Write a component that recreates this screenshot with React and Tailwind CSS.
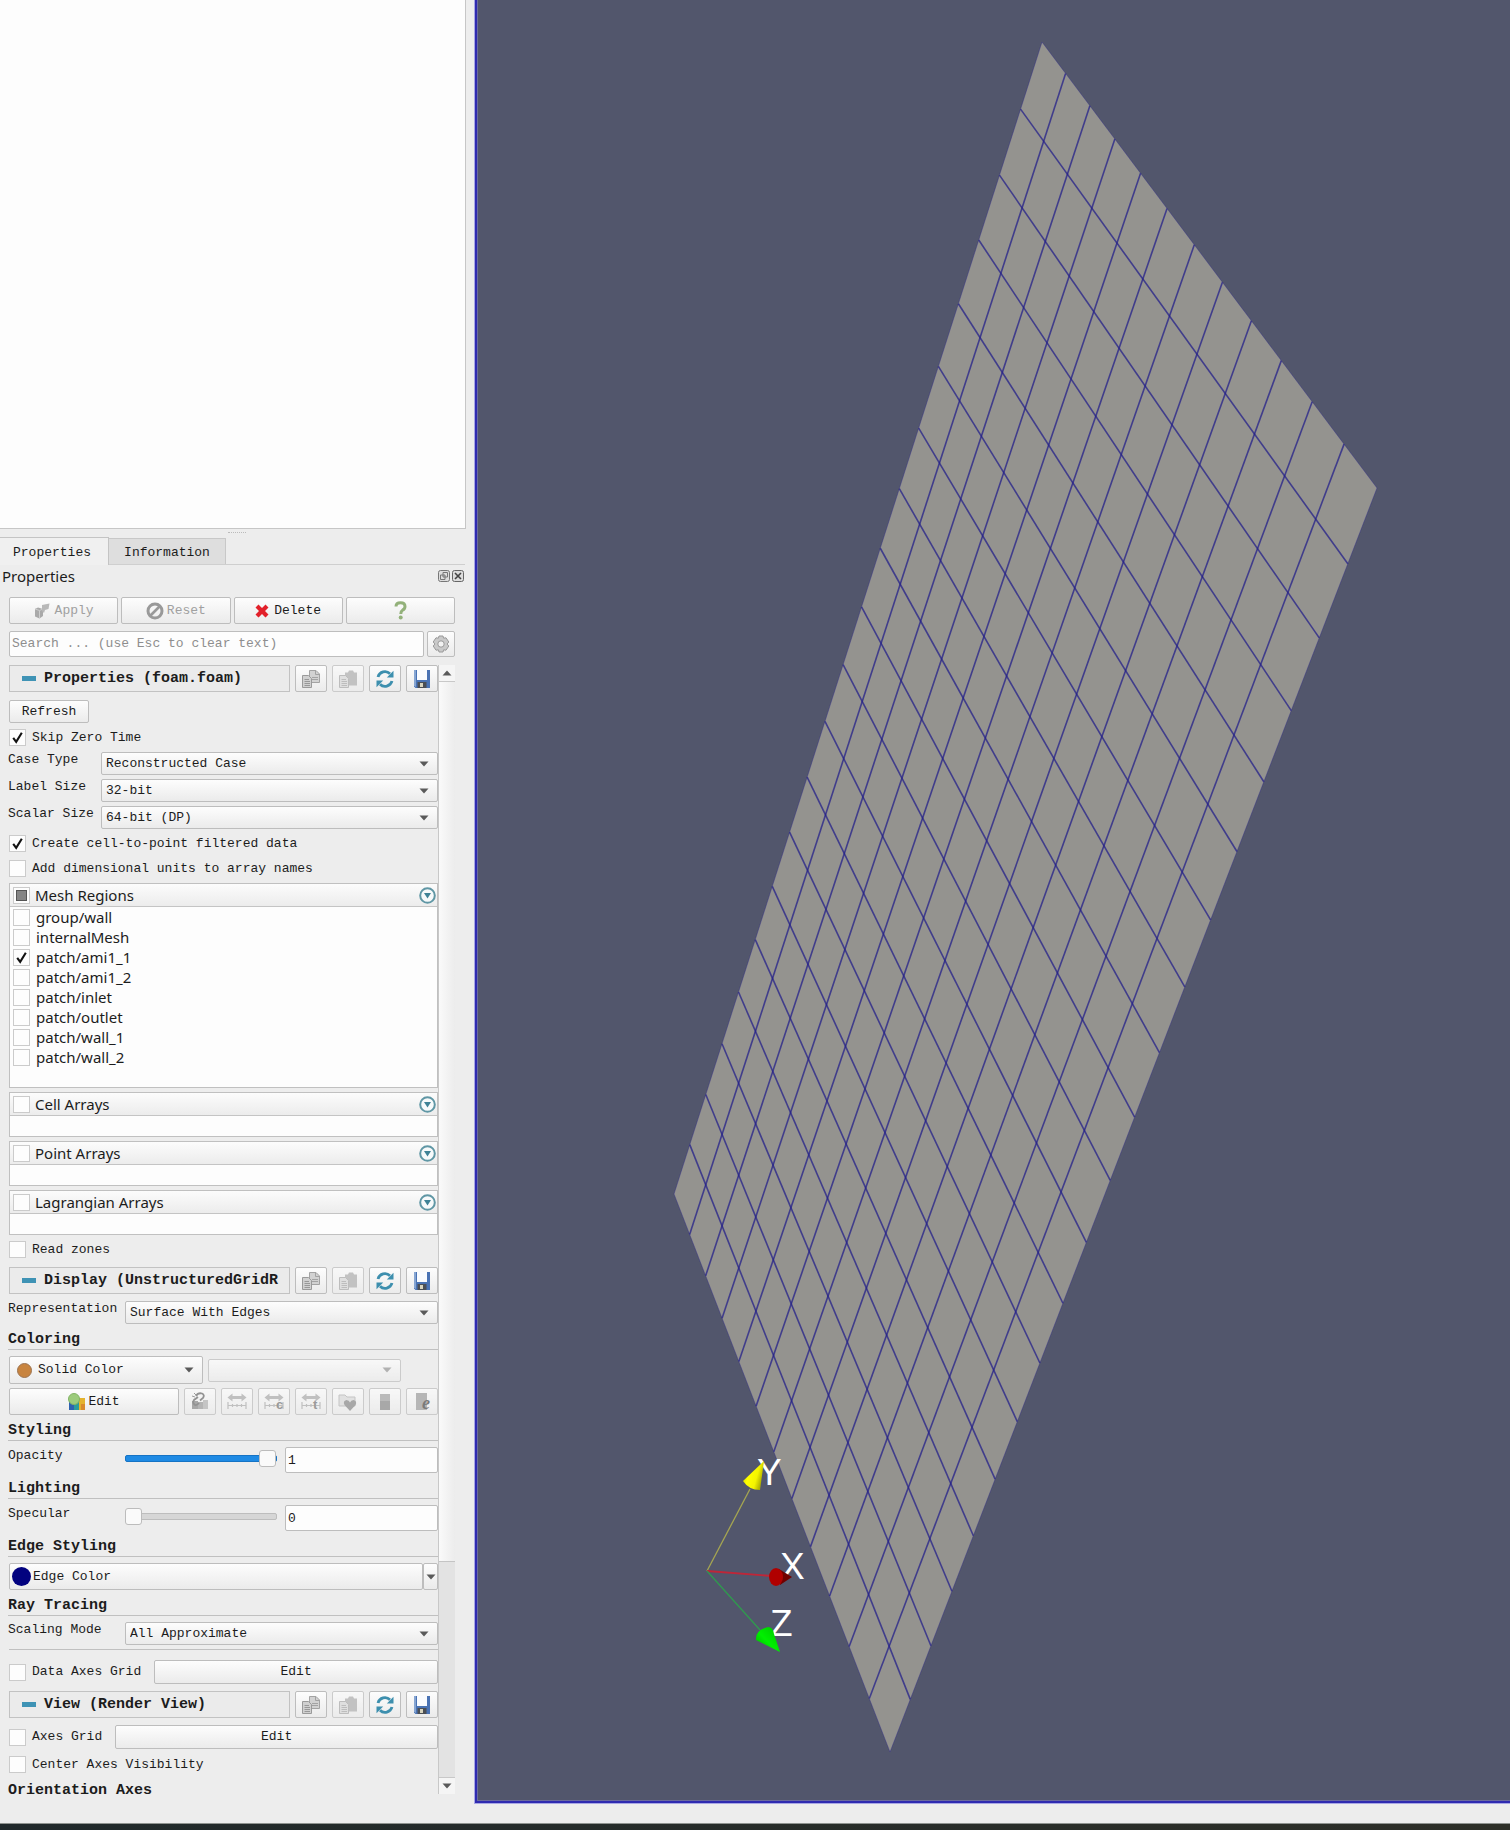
import React, { useEffect, useId, useRef } from "react";

const CORNERS = { top: [1042, 42], right: [1377, 488], bottom: [890, 1752], left: [674, 1194] };

// Projective map of the unit square: u runs top -> right, v runs top -> left.
function makeProjection({ top, right, bottom, left }) {
  const dx1 = right[0] - bottom[0], dx2 = left[0] - bottom[0];
  const dy1 = right[1] - bottom[1], dy2 = left[1] - bottom[1];
  const sx = top[0] - right[0] + bottom[0] - left[0];
  const sy = top[1] - right[1] + bottom[1] - left[1];
  const det = dx1 * dy2 - dx2 * dy1;
  const g = (sx * dy2 - dx2 * sy) / det;
  const h = (dx1 * sy - sx * dy1) / det;
  const a = right[0] - top[0] + g * right[0], b = left[0] - top[0] + h * left[0];
  const d = right[1] - top[1] + g * right[1], e = left[1] - top[1] + h * left[1];
  return (u, v) => {
    const w = g * u + h * v + 1;
    return [(a * u + b * v + top[0]) / w, (d * u + e * v + top[1]) / w];
  };
}

const project = makeProjection(CORNERS);
const COLUMNS = 12;
const ROWS = 20;

function meshLines() {
  const lines = [];
  for (let i = 0; i <= COLUMNS; i++) lines.push([project(i / COLUMNS, 0), project(i / COLUMNS, 1)]);
  for (let j = 0; j <= ROWS; j++) lines.push([project(0, j / ROWS), project(1, j / ROWS)]);
  return lines;
}

function RenderView() {
  return (
    <svg className="block h-full w-full" viewBox="478 0 1032 1800" preserveAspectRatio="xMidYMid slice" role="img" aria-label="Render view">
      <defs>
        <linearGradient id="coneY" x1="0" y1="0" x2="1" y2="0.4">
          <stop offset="0" stopColor="#b5b500" /><stop offset="0.4" stopColor="#ffff00" /><stop offset="0.75" stopColor="#f4f400" /><stop offset="1" stopColor="#b0b000" />
        </linearGradient>
        <linearGradient id="coneZ" x1="0" y1="1" x2="1" y2="0">
          <stop offset="0" stopColor="#00a800" /><stop offset="0.45" stopColor="#00f000" /><stop offset="1" stopColor="#00c400" />
        </linearGradient>
      </defs>
      <polygon points={Object.values(CORNERS).map((p) => p.join(",")).join(" ")} fill="#94938f" />
      <g stroke="#24208a">
        {meshLines().map(([p, q], i) => {
          const edge = i === 0 || i === COLUMNS || i === COLUMNS + 1 || i === COLUMNS + ROWS + 1;
          return <line key={i} x1={p[0]} y1={p[1]} x2={q[0]} y2={q[1]} strokeOpacity={edge ? 0.35 : 0.75} strokeWidth={edge ? 1 : 1.6} />;
        })}
      </g>
      <g strokeWidth="1.3">
        <line x1="707" y1="1571" x2="750" y2="1489" stroke="#a5a551" />
        <line x1="707" y1="1571" x2="772" y2="1576" stroke="#bf2638" strokeWidth="1.8" />
        <line x1="707" y1="1571" x2="760" y2="1630" stroke="#2f9a4e" />
      </g>
      <g fill="#fff" fontFamily="'Liberation Sans', sans-serif" fontSize="37">
        <text x="757" y="1485">Y</text>
        <text x="780" y="1579">X</text>
        <text x="770" y="1636">Z</text>
      </g>
      <path d="M764 1461 L743 1481 Q749 1490 760 1490 Z" fill="url(#coneY)" />
      <path d="M779 1569 L792 1577 L780 1585 Z" fill="#700000" />
      <ellipse cx="776" cy="1577" rx="7" ry="9" fill="#b00000" />
      <path d="M780 1652 L756 1640 Q755 1630 768 1627 Q773 1627 774 1634 Z" fill="url(#coneZ)" />
    </svg>
  );
}

function Caret({ className = "" }) {
  return (
    <svg className={"h-[6px] w-[10px] " + className} viewBox="0 0 10 6" aria-hidden="true">
      <path d="M0.5 0.5 H9.5 L5 5.5 Z" fill="currentColor" />
    </svg>
  );
}

function CheckBox({ state = false, id, label }) {
  const ref = useRef(null);
  useEffect(() => { ref.current.indeterminate = state === "mixed"; }, [state]);
  return (
    <span className="grid h-[17px] w-[17px] shrink-0 place-items-center">
      <input ref={ref} id={id} aria-label={label} type="checkbox" defaultChecked={state === true} className="peer col-start-1 row-start-1 m-0 h-[17px] w-[17px] appearance-none border border-[#cbcbcb] bg-[#fdfdfd]" />
      <svg className="pointer-events-none col-start-1 row-start-1 hidden h-[13px] w-[13px] peer-checked:block" viewBox="0 0 13 13" aria-hidden="true">
        <path d="M2.2 6.8 L5.2 10.8 L10.8 1.8" fill="none" stroke="#111" strokeWidth="2.1" />
      </svg>
      <span className="pointer-events-none col-start-1 row-start-1 hidden h-[11px] w-[11px] border border-[#555] bg-[#858585] peer-indeterminate:block" />
    </span>
  );
}

function CheckRow({ label, checked, className = "" }) {
  const id = useId();
  return (
    <div className={"flex h-[17px] items-center gap-[6px] " + className}>
      <CheckBox state={checked} id={id} />
      <label htmlFor={id} className="whitespace-pre">{label}</label>
    </div>
  );
}

const FACE = "rounded-[2px] border border-[#bdbdbd] bg-linear-to-b from-[#fdfdfd] to-[#ebebeb]";

function Select({ id, value, className = "", label }) {
  return (
    <div className={"grid items-center " + className}>
      <select id={id} aria-label={label} className={"col-start-1 row-start-1 h-full w-full appearance-none pl-[4px] " + FACE}>
        <option>{value}</option>
      </select>
      <Caret className="pointer-events-none col-start-1 row-start-1 mr-[9px] justify-self-end text-[#5a5a5a]" />
    </div>
  );
}

function SelectRow({ label, value, wide, className = "" }) {
  const id = useId();
  return (
    <div className={"flex h-[23px] " + className}>
      <label htmlFor={id} className={"-ml-px shrink-0 leading-[16px] " + (wide ? "w-[117px]" : "w-[93px]")}>{label}</label>
      <Select id={id} value={value} className="min-w-0 flex-1" />
    </div>
  );
}

function ToolButton({ label, children, disabled }) {
  return (
    <button type="button" aria-label={label} disabled={disabled} className={"flex h-[27px] w-[32px] shrink-0 items-center justify-center " + FACE + (disabled ? " opacity-70" : "")}>
      {children}
    </button>
  );
}

function CopyIcon() {
  return (
    <svg className="h-5 w-5" viewBox="0 0 20 20" aria-hidden="true">
      <path d="M8.5 1.5 H15 L18.5 5 V13.5 H8.5 Z" fill="#d2d2d2" stroke="#a3a3a3" />
      <path d="M14.5 1.5 V5.5 H18.5 M11 8.5 H17 M11 10.5 H17" fill="none" stroke="#a3a3a3" />
      <path d="M1.5 6.5 H7.5 L10.5 9.5 V18.5 H1.5 Z" fill="#d0d0d0" stroke="#9a9a9a" />
      <path d="M3.5 10.5 H8 M3.5 12.5 H9 M3.5 14.5 H9 M3.5 16.5 H9" stroke="#989898" />
    </svg>
  );
}

function PasteIcon() {
  return (
    <svg className="h-5 w-5" viewBox="0 0 20 20" aria-hidden="true">
      <path d="M7 3.5 L10 3.5 L11 1.5 H15 L16 3.5 H19 V16.5 H7 Z" fill="#b0b0b0" />
      <path d="M1.5 6.5 H7.5 L10.5 9.5 V18.5 H1.5 Z" fill="#dadada" stroke="#a9a9a9" />
      <path d="M3.5 10.5 H8 M3.5 12.5 H9 M3.5 14.5 H9 M3.5 16.5 H9" stroke="#aaa" />
    </svg>
  );
}

function ReloadIcon() {
  return (
    <svg className="h-5 w-5" viewBox="0 0 20 20" aria-hidden="true">
      <path d="M3 8 A7.2 7.2 0 0 1 15 4.8" fill="none" stroke="#3d8fae" strokeWidth="2.8" />
      <path d="M18.5 1.8 V8.5 H11.8 Z" fill="#3d8fae" />
      <path d="M17 12 A7.2 7.2 0 0 1 5 15.2" fill="none" stroke="#3d8fae" strokeWidth="2.8" />
      <path d="M1.5 18.2 V11.5 H8.2 Z" fill="#3d8fae" />
    </svg>
  );
}

function SaveIcon() {
  return (
    <svg className="h-5 w-5" viewBox="0 0 20 20" aria-hidden="true">
      <path d="M2 1 H18 V19 H3.5 L2 17.5 Z" fill="#4a73b4" />
      <path d="M2 1 H4 V18 L2 17 Z" fill="#86a5d2" />
      <rect x="5" y="1" width="10" height="10" fill="#fafcff" />
      <rect x="5.5" y="13" width="9" height="6" fill="#4b4f55" />
      <rect x="8" y="14" width="3" height="4" fill="#d8d4be" />
    </svg>
  );
}

function SectionHeader({ title, className = "" }) {
  return (
    <div className={"flex h-[27px] gap-[5px] " + className}>
      <button type="button" className="flex min-w-0 flex-1 items-center gap-[8px] overflow-hidden border border-[#c2c2c2] bg-[#ebebeb] pl-[12px]">
        <span className="h-[5px] w-[14px] shrink-0 bg-[#3f93b5]" />
        <span className="whitespace-pre text-[15px] font-bold leading-[18px]">{title}</span>
      </button>
      <ToolButton label="Copy"><CopyIcon /></ToolButton>
      <ToolButton label="Paste" disabled><PasteIcon /></ToolButton>
      <ToolButton label="Restore defaults"><ReloadIcon /></ToolButton>
      <ToolButton label="Save defaults"><SaveIcon /></ToolButton>
    </div>
  );
}

function GroupTitle({ children, className = "" }) {
  return (
    <h3 className={"-ml-px h-[19px] border-b border-[#c0c0c0] text-[15px] font-bold leading-[18px] " + className}>{children}</h3>
  );
}

const SANS = "font-['Noto_Sans','Open_Sans',sans-serif] text-[15px]";

function ArrayBox({ title, state, items = [], className = "", bodyClass }) {
  const id = useId();
  return (
    <section className={"border border-[#c0c0c0] bg-[#fdfdfd] " + SANS + " " + className}>
      <div className="flex h-[23px] items-center gap-[5px] border-b border-[#c4c4c4] bg-linear-to-b from-[#fcfcfc] to-[#ececec] pl-[3px] pr-px">
        <CheckBox state={state} id={id} />
        <label htmlFor={id} className="flex-1 leading-[20px]">{title}</label>
        <button type="button" aria-label={title + " menu"}>
          <svg className="h-[17px] w-[17px]" viewBox="0 0 17 17" aria-hidden="true">
            <circle cx="8.5" cy="8.5" r="7.3" fill="#f7fafb" stroke="#6097a5" strokeWidth="2" />
            <path d="M5 6 H12 L8.5 11.5 Z" fill="#3f8296" />
          </svg>
        </button>
      </div>
      <ul className={bodyClass}>
        {items.map(([name, on]) => (
          <li key={name} className="flex h-5 items-center gap-[6px] pl-[3px]">
            <CheckBox state={on} id={"region-" + name} />
            <label htmlFor={"region-" + name} className="leading-5">{name}</label>
          </li>
        ))}
      </ul>
    </section>
  );
}

function ValueRow({ label, value, className = "", track }) {
  const id = useId();
  return (
    <div className={"flex h-[26px] " + className}>
      <label htmlFor={id} className="-ml-px w-[117px] shrink-0 leading-[18px]">{label}</label>
      <div className="flex min-w-0 flex-1 items-start gap-[8px]">
        <input id={id} type="range" min="0" max="1" step="0.01" defaultValue={value} className={"mt-[3px] h-[17px] min-w-0 flex-1 appearance-none bg-transparent [&::-webkit-slider-runnable-track]:h-[7px] [&::-webkit-slider-runnable-track]:rounded-[2px] [&::-webkit-slider-runnable-track]:border [&::-webkit-slider-thumb]:-mt-[6px] [&::-webkit-slider-thumb]:h-[17px] [&::-webkit-slider-thumb]:w-[17px] [&::-webkit-slider-thumb]:appearance-none [&::-webkit-slider-thumb]:rounded-[3px] [&::-webkit-slider-thumb]:border [&::-webkit-slider-thumb]:border-[#bcbcbc] [&::-webkit-slider-thumb]:bg-[#fafafa] " + track} />
        <input type="text" aria-label={label + " value"} defaultValue={value} className="h-[26px] w-[153px] rounded-[2px] border border-[#bdbdbd] bg-[#fdfdfd] px-[2px]" />
      </div>
    </div>
  );
}

const BLUE_TRACK = "[&::-webkit-slider-runnable-track]:border-[#1673c4] [&::-webkit-slider-runnable-track]:bg-[#1e8ae4] [&::-webkit-slider-thumb]:-mr-px";
const GREY_TRACK = "[&::-webkit-slider-runnable-track]:border-[#bdbdbd] [&::-webkit-slider-runnable-track]:bg-[#d6d6d6] [&::-webkit-slider-thumb]:-ml-px";

const REGIONS = [
  ["group/wall", false], ["internalMesh", false], ["patch/ami1_1", true], ["patch/ami1_2", false],
  ["patch/inlet", false], ["patch/outlet", false], ["patch/wall_1", false], ["patch/wall_2", false],
];

function RangeIcon({ mark }) {
  return (
    <svg className="h-5 w-5" viewBox="0 0 20 20" aria-hidden="true">
      <path d="M0.5 5.5 L5.5 1.5 V4 H14.5 V1.5 L19.5 5.5 L14.5 9.5 V7 H5.5 V9.5 Z" fill="#adadad" />
      <path d="M1 10 V17 M19 10 V17 M1 13.5 H19 M5.5 12 V15 M10 12 V15 M14.5 12 V15" stroke="#adadad" strokeWidth="1.2" fill="none" />
      {mark && <text x="12" y="17" fontSize="13" fontWeight="bold" fontFamily="'Liberation Sans', sans-serif" fill="#777">{mark}</text>}
    </svg>
  );
}

function ColorTools() {
  return (
    <>
      <ToolButton label="Use separate color map" disabled>
        <svg className="h-5 w-5" viewBox="0 0 20 20" aria-hidden="true">
          <path d="M2 9 H8 V17 H2 Z" fill="#8a8a8a" /><path d="M8 10 H13 V17 H8 Z" fill="#9c9c9c" /><path d="M13 8 H18 V17 H13 Z" fill="#b5b5b5" />
          <path d="M6 4 Q8 0.500 12 1.500 Q15 3 13 6 L10 8.500 M8 5 L4 8 Q2 11 5 13 Q7 13.500 9 11" fill="none" stroke="#6c6c6c" strokeWidth="1.800" />
          <path d="M2 4 L5 5 M4 1 L6 3" stroke="#777" />
        </svg>
      </ToolButton>
      <ToolButton label="Rescale to data range" disabled><RangeIcon /></ToolButton>
      <ToolButton label="Rescale to custom range" disabled><RangeIcon mark="c" /></ToolButton>
      <ToolButton label="Rescale over time" disabled><RangeIcon mark="t" /></ToolButton>
      <ToolButton label="Choose preset" disabled>
        <svg className="h-5 w-5" viewBox="0 0 20 20" aria-hidden="true">
          <path d="M1 3 H7 L9 5 H17 V14 H1 Z" fill="#dcdcdc" stroke="#b5b5b5" />
          <path d="M12 19 L6.5 13 Q4.5 9 8.5 8 Q11 8 12 10.500 Q13 8 15.500 8 Q19.500 9 17.500 13 Z" fill="#8c8c8c" />
        </svg>
      </ToolButton>
      <ToolButton label="Show color legend" disabled>
        <svg className="h-5 w-5" viewBox="0 0 20 20" aria-hidden="true">
          <rect x="5" y="2" width="10" height="16" fill="#a5a5a5" /><rect x="5" y="9" width="10" height="9" fill="#8c8c8c" />
        </svg>
      </ToolButton>
      <ToolButton label="Edit color legend" disabled>
        <svg className="h-5 w-5" viewBox="0 0 20 20" aria-hidden="true">
          <rect x="4" y="1" width="11" height="17" fill="#a0a0a0" />
          <text x="10" y="17" fontSize="18" fontWeight="bold" fontStyle="italic" fontFamily="'Liberation Serif', serif" fill="#4a4a4a">e</text>
        </svg>
      </ToolButton>
    </>
  );
}

function DockHeader() {
  return (
    <>
      <div className="mx-auto my-[3px] h-[2px] w-[18px] border-t border-dotted border-[#bbb]" />
      <div role="tablist" className="mr-[9px] flex h-[28px] items-end border-b border-[#cfcfcf]">
        <button type="button" role="tab" aria-selected="true" className="-mb-px h-[28px] w-[109px] border-r border-t border-[#c4c4c4] bg-[#f0f0f0] pr-[4px] pt-[3px]">Properties</button>
        <button type="button" role="tab" aria-selected="false" className="h-[26px] w-[117px] border-r border-t border-[#c8c8c8] bg-[#dedede] pt-[3px]">Information</button>
      </div>
      <div className="mr-[10px] flex h-[25px] items-center justify-between pb-[4px] pl-[2px]">
        <h2 className={SANS + " leading-5"}>Properties</h2>
        <div className="flex gap-[2px]">
          <button type="button" aria-label="Float" className="h-[12px] w-[12px]">
            <svg className="h-[12px] w-[12px]" viewBox="0 0 12 12" aria-hidden="true">
              <rect x="0.5" y="0.5" width="11" height="11" rx="2" fill="#ddd" stroke="#777" />
              <path d="M5 2.500 H9.500 V7 H5 Z M2.500 5 H7 V9.500 H2.500 Z" fill="none" stroke="#777" />
            </svg>
          </button>
          <button type="button" aria-label="Close" className="h-[12px] w-[12px]">
            <svg className="h-[12px] w-[12px]" viewBox="0 0 12 12" aria-hidden="true">
              <rect x="0.5" y="0.5" width="11" height="11" rx="2" fill="#ddd" stroke="#666" />
              <path d="M3 3 L9 9 M9 3 L3 9" stroke="#444" strokeWidth="1.6" />
            </svg>
          </button>
        </div>
      </div>
    </>
  );
}

function Actions() {
  const base = "flex h-[27px] items-center justify-center gap-[5px] " + FACE;
  return (
    <div className="mt-[7px] grid grid-cols-4 gap-[3px]">
      <button type="button" disabled className={base + " text-[#a0a0a0]"}>
        <svg className="h-4 w-4" viewBox="0 0 16 16" aria-hidden="true">
          <path d="M1 6 L4 4.500 L9 6 V13 L5.500 15.500 L1 13.500 Z" fill="#a9a9a9" /><path d="M1 6 L5.500 7.500 V15 M5.500 7.500 L9 6" stroke="#ccc" fill="none" />
          <path d="M8 2 L15.500 0.500 L14.500 6 L11 7 L10 10 L8 8 Z" fill="#b8b8b8" />
        </svg>
        Apply
      </button>
      <button type="button" disabled className={base + " text-[#a0a0a0]"}>
        <svg className="-mr-[2px] h-[18px] w-[18px]" viewBox="0 0 18 18" aria-hidden="true">
          <circle cx="9" cy="9" r="7" fill="none" stroke="#999" strokeWidth="3" /><path d="M13.500 4.500 L4.500 13.500" stroke="#999" strokeWidth="2.600" />
        </svg>
        Reset
      </button>
      <button type="button" className={base}>
        <svg className="h-[14px] w-[14px]" viewBox="0 0 14 14" aria-hidden="true">
          <path d="M3.500 0.500 L7 4 L10.500 0.500 L13.500 3.500 L10 7 L13.500 10.500 L10.500 13.500 L7 10 L3.500 13.500 L0.500 10.500 L4 7 L0.500 3.500 Z" fill="#e2202a" />
        </svg>
        Delete
      </button>
      <button type="button" aria-label="Help" className={base}>
        <svg className="h-[19px] w-[13px]" viewBox="0 0 13 19" aria-hidden="true">
          <path d="M2 5.500 Q2 1.800 6.500 1.800 Q11 1.800 11 5.500 Q11 8 8.500 9.200 Q6.800 10.200 6.800 13" fill="none" stroke="#93b17a" strokeWidth="3" />
          <circle cx="6.700" cy="16.500" r="2" fill="#93b17a" />
        </svg>
      </button>
    </div>
  );
}

function Search() {
  return (
    <div className="mt-[7px] flex h-[26px] gap-[3px]">
      <input type="search" aria-label="Search properties" placeholder="Search ... (use Esc to clear text)" className="min-w-0 flex-1 rounded-[2px] border border-[#bdbdbd] bg-[#fdfdfd] px-[2px] placeholder:text-[#8e8e8e]" />
      <button type="button" aria-label="Advanced properties" className={"flex w-[28px] items-center justify-center " + FACE}>
        <svg className="h-[18px] w-[18px]" viewBox="0 0 18 18" aria-hidden="true">
          <path d="M7 1 H11 L11.600 3.200 L14 2.800 L16.800 7 L15 9 L16.800 11 L14 15.200 L11.600 14.800 L11 17 H7 L6.400 14.800 L4 15.200 L1.200 11 L3 9 L1.200 7 L4 2.800 L6.400 3.200 Z" fill="#c9c9c9" stroke="#9a9a9a" strokeLinejoin="round" />
          <circle cx="9" cy="9" r="3.200" fill="#f2f2f2" stroke="#999" />
        </svg>
      </button>
    </div>
  );
}

function ScrollBar() {
  return (
    <div className="flex w-[17px] shrink-0 flex-col border-l border-[#c8c8c8] bg-[#e3e3e3]">
      <button type="button" aria-label="Scroll up" className="flex h-[17px] items-center justify-center border-b border-[#c8c8c8] bg-[#f5f5f5] text-[#5a5a5a]"><Caret className="rotate-180" /></button>
      <div className="min-h-0 flex-[881] border-b border-[#c4c4c4] bg-linear-to-r from-[#fafafa] to-[#ececec]" />
      <div className="flex-[216]" />
      <button type="button" aria-label="Scroll down" className="flex h-[17px] items-center justify-center border-t border-[#c8c8c8] bg-[#f5f5f5] text-[#5a5a5a]"><Caret /></button>
    </div>
  );
}

function PropertyForm() {
  return (
    <div className="min-w-0 flex-1">
      <SectionHeader title="Properties (foam.foam)" />
      <button type="button" className={"mt-[8px] block h-[23px] w-[80px] " + FACE}>Refresh</button>
      <CheckRow label="Skip Zero Time" checked className="mt-[6px]" />
      <SelectRow label="Case Type" value="Reconstructed Case" className="mt-[6px]" />
      <SelectRow label="Label Size" value="32-bit" className="mt-[4px]" />
      <SelectRow label="Scalar Size" value="64-bit (DP)" className="mt-[4px]" />
      <CheckRow label="Create cell-to-point filtered data" checked className="mt-[6px]" />
      <CheckRow label="Add dimensional units to array names" className="mt-[8px]" />
      <ArrayBox title="Mesh Regions" state="mixed" items={REGIONS} className="mt-[6px]" bodyClass="h-[180px]" />
      <ArrayBox title="Cell Arrays" className="mt-[4px]" bodyClass="h-[20px]" />
      <ArrayBox title="Point Arrays" className="mt-[4px]" bodyClass="h-[20px]" />
      <ArrayBox title="Lagrangian Arrays" className="mt-[4px]" bodyClass="h-[20px]" />
      <CheckRow label="Read zones" className="mt-[6px]" />
      <SectionHeader title="Display (UnstructuredGridR" className="mt-[9px]" />
      <SelectRow label="Representation" value="Surface With Edges" wide className="mt-[7px]" />
      <GroupTitle className="mt-[7px]">Coloring</GroupTitle>
      <div className="mt-[6px] flex items-center gap-[5px]">
        <div className="grid h-[28px] flex-1 items-center">
          <select aria-label="Color by" className={"col-start-1 row-start-1 h-full w-full appearance-none pl-[28px] " + FACE}><option>Solid Color</option></select>
          <span className="pointer-events-none col-start-1 row-start-1 ml-[8px] h-[15px] w-[15px] rounded-full border border-[#9c7350] bg-[#c8843f]" />
          <Caret className="pointer-events-none col-start-1 row-start-1 mr-[9px] justify-self-end text-[#5a5a5a]" />
        </div>
        <div className="mr-[37px] grid h-[23px] flex-1 items-center opacity-70">
          <select aria-label="Component" disabled className={"col-start-1 row-start-1 h-full w-full appearance-none " + FACE} />
          <Caret className="pointer-events-none col-start-1 row-start-1 mr-[9px] justify-self-end text-[#999]" />
        </div>
      </div>
      <div className="mt-[4px] flex gap-[5px]">
        <button type="button" className={"flex h-[27px] min-w-0 flex-1 items-center justify-center gap-[3px] " + FACE}>
          <svg className="h-[17px] w-[17px]" viewBox="0 0 17 17" aria-hidden="true">
            <rect x="1" y="8" width="5" height="9" fill="#2e62b0" /><rect x="6" y="8" width="5" height="9" fill="#2b9c9c" /><rect x="11" y="5" width="6" height="12" fill="#e4b32d" /><rect x="13" y="11" width="4" height="6" fill="#d98a2b" />
            <circle cx="6" cy="6" r="5.500" fill="#9ccb7c" stroke="#82b465" />
          </svg>
          Edit
        </button>
        <ColorTools />
      </div>
      <GroupTitle className="mt-[7px]">Styling</GroupTitle>
      <ValueRow label="Opacity" value="1" track={BLUE_TRACK} className="mt-[6px]" />
      <GroupTitle className="mt-[7px]">Lighting</GroupTitle>
      <ValueRow label="Specular" value="0" track={GREY_TRACK} className="mt-[6px]" />
      <GroupTitle className="mt-[7px]">Edge Styling</GroupTitle>
      <div className="mt-[6px] flex h-[27px]">
        <button type="button" className={"flex min-w-0 flex-1 items-center gap-[2px] pl-[2px] " + FACE}>
          <span className="h-[19px] w-[19px] rounded-full bg-[#02027f]" />Edge Color
        </button>
        <button type="button" aria-label="Edge color options" className={"flex w-[15px] items-center justify-center text-[#5a5a5a] " + FACE}><Caret /></button>
      </div>
      <GroupTitle className="mt-[7px]">Ray Tracing</GroupTitle>
      <SelectRow label="Scaling Mode" value="All Approximate" wide className="mt-[6px]" />
      <hr className="mt-[4px] border-t border-[#c0c0c0]" />
      <div className="mt-[10px] flex h-[24px] items-center gap-[13px]">
        <CheckRow label="Data Axes Grid" />
        <button type="button" aria-label="Edit data axes grid" className={"h-full flex-1 " + FACE}>Edit</button>
      </div>
      <SectionHeader title="View (Render View)" className="mt-[7px]" />
      <div className="mt-[7px] flex h-[24px] items-center gap-[13px]">
        <CheckRow label="Axes Grid" />
        <button type="button" aria-label="Edit axes grid" className={"h-full flex-1 " + FACE}>Edit</button>
      </div>
      <CheckRow label="Center Axes Visibility" className="mt-[7px]" />
      <h3 className="-ml-px mt-[9px] h-[12px] text-[15px] font-bold leading-[18px]">Orientation Axes</h3>
    </div>
  );
}

export default function App() {
  return (
    <div className="flex min-h-screen flex-col bg-[#ededed] font-['Liberation_Mono',monospace] text-[13px] text-[#1c1c1c]">
      <div className="flex flex-1">
        <aside className="flex w-[474px] shrink-0 flex-col">
          <div className="mr-[8px] flex-1 border-b border-r border-[#c6c6c6] bg-[#fdfdfd]" />
          <DockHeader />
          <div className="ml-[9px] mr-[19px]">
            <Actions />
            <Search />
            <div className="mb-[29px] mt-[8px] flex">
              <PropertyForm />
              <ScrollBar />
            </div>
          </div>
        </aside>
        <main className="mb-[19px] flex min-w-0 flex-1 border-b border-l border-[#a9a7e4]">
          <div className="flex min-w-0 flex-1 border-b-2 border-l-2 border-[#2f2bb0]">
            <div className="min-w-0 flex-1 border-b border-l border-[#6b6a9c] bg-[#52566c]">
              <RenderView />
            </div>
          </div>
        </main>
      </div>
      <footer className="h-[7px] border-t border-[#8e928f] bg-linear-to-r from-[#20292b] to-[#2d2f28]" />
    </div>
  );
}
